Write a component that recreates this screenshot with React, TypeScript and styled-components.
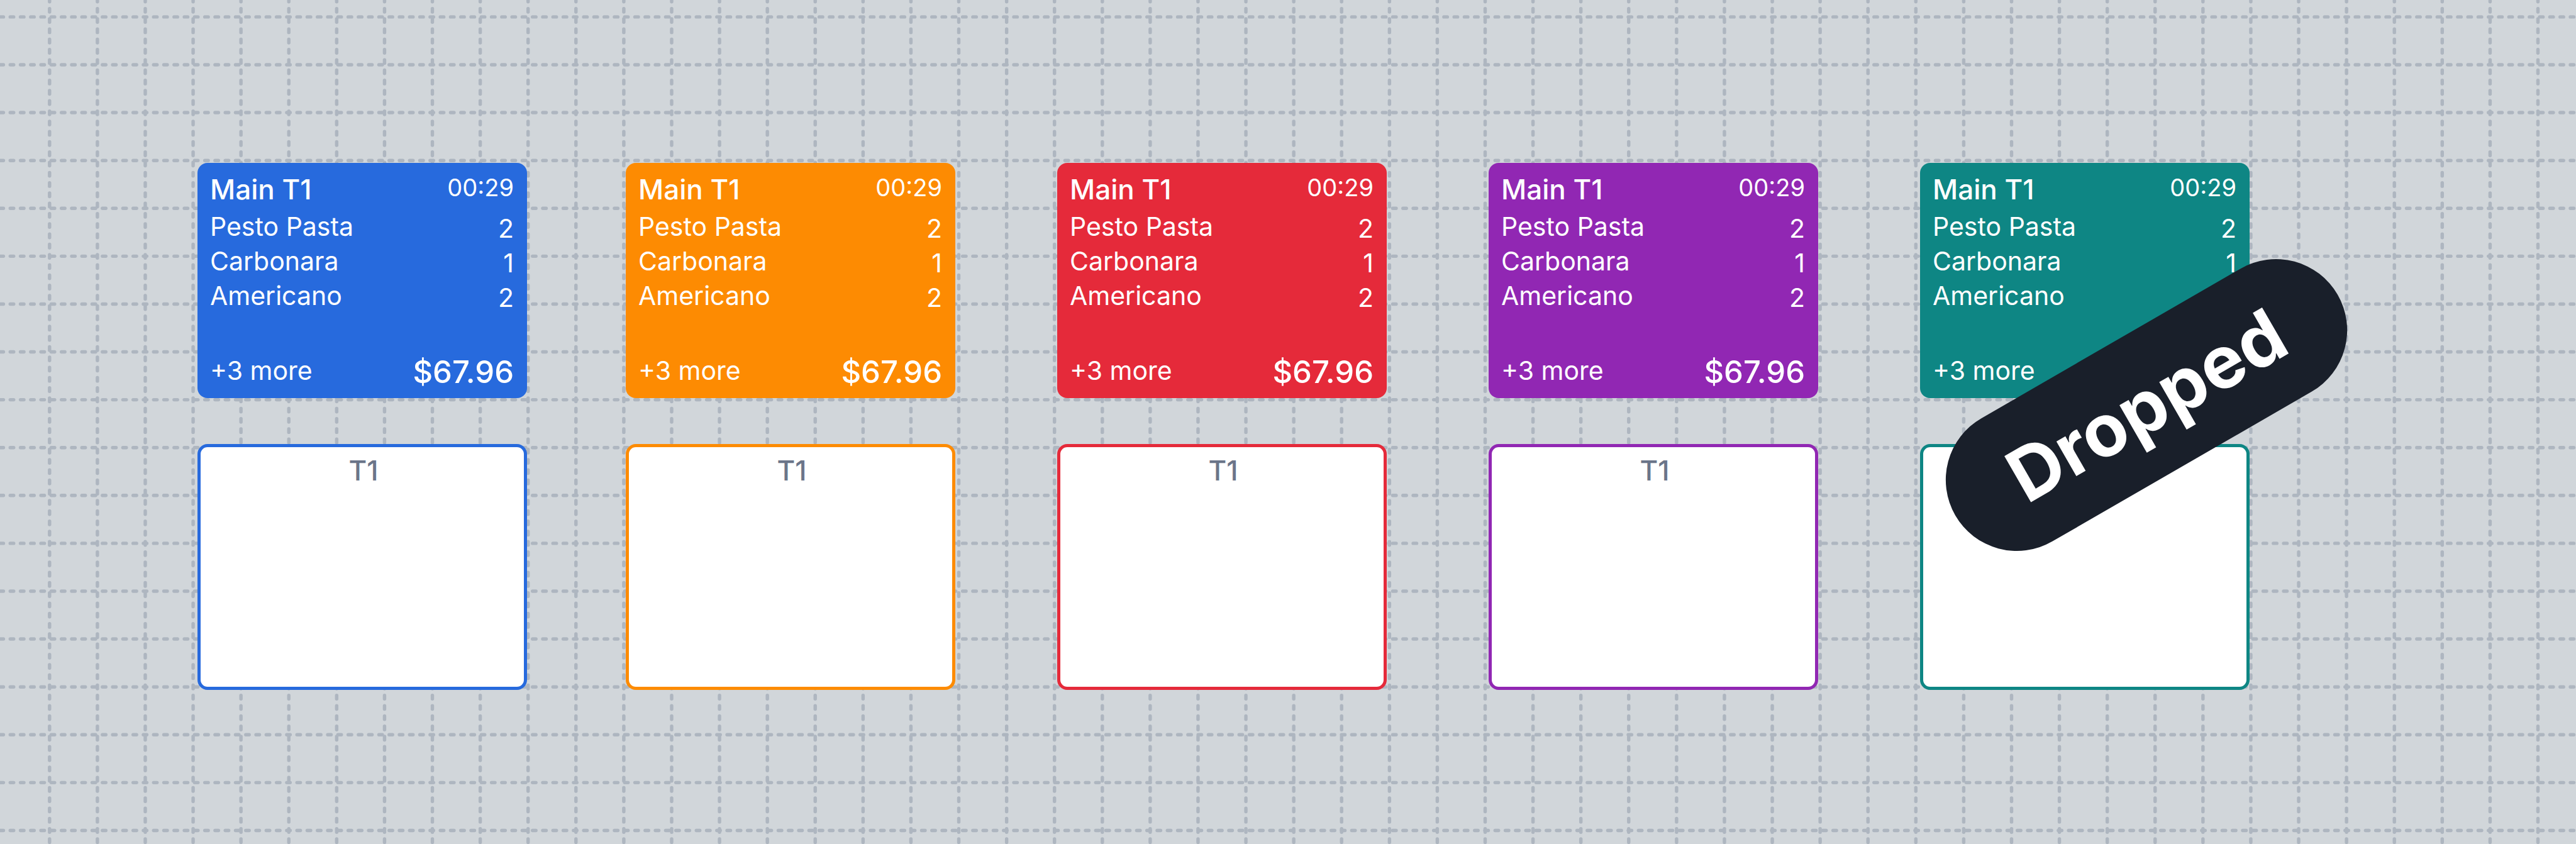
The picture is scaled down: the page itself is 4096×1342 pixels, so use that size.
import React from "react";
import styled, { createGlobalStyle } from "styled-components";

const GlobalStyle = createGlobalStyle`
  *, *::before, *::after { box-sizing: border-box; }
  body {
    margin: 0;
    background: #d1d6da;
    font-family: Inter, "Liberation Sans", sans-serif;
  }
`;

const Canvas = styled.main`
  position: relative;
  min-height: 100vh;
  overflow: hidden;
  padding: 259px 519px 0 314px;
`;

const GridLines = styled.svg`
  position: absolute;
  inset: 0;
  width: 100%;
  height: 100%;
  stroke: #aeb6c0;
  stroke-width: 5.43;
  stroke-linecap: round;
`;

const Board = styled.div`
  position: relative;
  display: grid;
  grid-template-columns: 681fr repeat(3, 686fr) 524fr;
`;

const Column = styled.section`
  position: relative;
  display: flex;
  flex-direction: column;
  gap: 73px;
  width: 524px;
`;

const OrderCard = styled.article<{ $color: string }>`
  display: flex;
  flex-direction: column;
  height: 374px;
  padding: 16px 21px 12px 20px;
  border-radius: 16px;
  background: ${(p) => p.$color};
  color: #fff;
`;

const Row = styled.div`
  display: flex;
  justify-content: space-between;
  align-items: flex-start;
`;

const Title = styled.h2`
  margin: 0;
  font-size: 44px;
  font-weight: 500;
  line-height: 52px;
`;

const Time = styled.time`
  font-size: 38px;
  line-height: 46px;
`;

const Items = styled.ul`
  flex: 1;
  margin: 6px 0 0;
  padding: 0;
  list-style: none;
`;

const Item = styled.li`
  display: flex;
  justify-content: space-between;
  font-size: 41px;
  line-height: 55px;
`;

const Quantity = styled.span`
  padding-top: 6px;
  line-height: 49px;
`;

const More = styled.span`
  font-size: 41px;
  line-height: 52px;
`;

const Total = styled.strong`
  font-size: 49px;
  font-weight: 500;
  line-height: 58px;
`;

const FreeTable = styled.article<{ $color: string }>`
  height: 391px;
  padding: 11px 18px 11px 22px;
  border: 5px solid ${(p) => p.$color};
  border-radius: 16px;
  background: #fff;
  color: #6b7589;
  text-align: center;
`;

const DroppedBadge = styled.div`
  position: absolute;
  top: 272px;
  left: 9px;
  display: flex;
  align-items: center;
  justify-content: center;
  width: 702px;
  height: 226px;
  border-radius: 113px;
  background: #191f2a;
  color: #fff;
  font-size: 116px;
  font-weight: 700;
  transform: rotate(-30deg);
`;

const COLORS = ["#276add", "#fd8b02", "#e52a3a", "#9127b3", "#0e8684"];

const ORDER = [
  { name: "Pesto Pasta", quantity: 2 },
  { name: "Carbonara", quantity: 1 },
  { name: "Americano", quantity: 2 },
];

const CELL = 76.09;
const verticals = Array.from({ length: 54 }, (_, i) => 78.8 + i * CELL);
const horizontals = Array.from({ length: 18 }, (_, i) => 26.9 + i * CELL);

function DashedGrid() {
  return (
    <GridLines aria-hidden="true">
      <g strokeDasharray="5.43 10.872" strokeDashoffset="2.71">
        {verticals.map((x) => (
          <line key={x} x1={x} x2={x} y1="0" y2="100%" />
        ))}
      </g>
      <g strokeDasharray="5.43 10.853">
        {horizontals.map((y) => (
          <line key={y} x1="0" x2="100%" y1={y} y2={y} />
        ))}
      </g>
    </GridLines>
  );
}

function TableColumn({ color, dropped }: { color: string; dropped: boolean }) {
  return (
    <Column>
      <OrderCard $color={color}>
        <Row>
          <Title>Main T1</Title>
          <Time>00:29</Time>
        </Row>
        <Items>
          {ORDER.map((item) => (
            <Item key={item.name}>
              <span>{item.name}</span>
              <Quantity>{item.quantity}</Quantity>
            </Item>
          ))}
        </Items>
        <Row>
          <More>+3 more</More>
          <Total>$67.96</Total>
        </Row>
      </OrderCard>
      <FreeTable $color={color}>
        <Title>T1</Title>
      </FreeTable>
      {dropped && <DroppedBadge>Dropped</DroppedBadge>}
    </Column>
  );
}

export default function App() {
  return (
    <>
      <GlobalStyle />
      <Canvas>
        <DashedGrid />
        <Board>
          {COLORS.map((color, i) => (
            <TableColumn key={color} color={color} dropped={i === COLORS.length - 1} />
          ))}
        </Board>
      </Canvas>
    </>
  );
}
